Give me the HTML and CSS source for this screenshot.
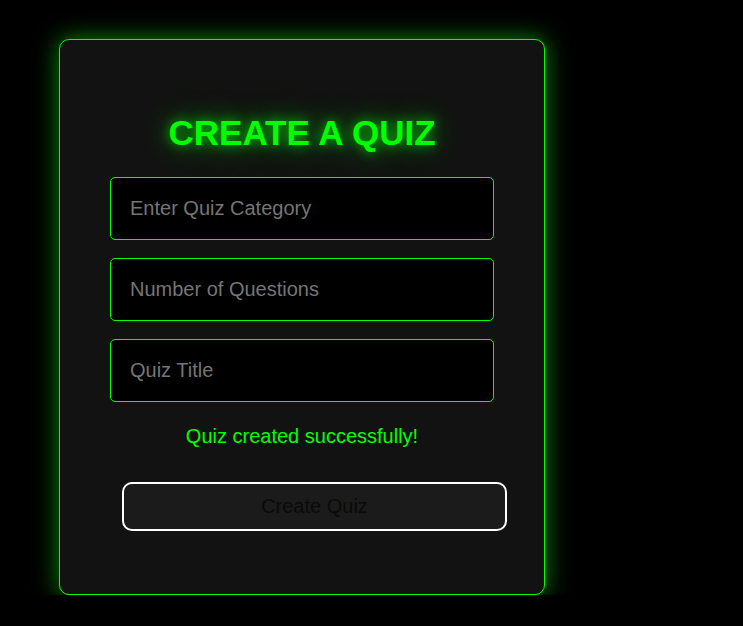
FILE: index.html
```html
<!DOCTYPE html>
<html lang="en">
<head>
<meta charset="utf-8">
<title>Create a Quiz</title>
<link rel="stylesheet" href="styles.css">
</head>
<body>
<div class="page">
  <div class="card">
    <h1 class="title">CREATE A QUIZ</h1>
    <form class="form">
      <input class="field" type="text" placeholder="Enter Quiz Category">
      <input class="field" type="text" placeholder="Number of Questions">
      <input class="field" type="text" placeholder="Quiz Title">
    </form>
    <p class="message">Quiz created successfully!</p>
    <button class="btn" type="button">Create Quiz</button>
  </div>
</div>
</body>
</html>
```
FILE: styles.css
```css
html, body {
  margin: 0;
  padding: 0;
  background: #000;
  font-family: "Liberation Sans", Arial, sans-serif;
}
.page {
  padding: 39px 0 0 59px;
}
.card {
  box-sizing: border-box;
  width: 486px;
  height: 556px;
  border: 1px solid #00ff00;
  border-radius: 10px;
  background: #121212;
  box-shadow: 0 0 24px rgba(0, 255, 0, 0.55);
  padding: 73px 50px 0 50px;
}
.title {
  margin: 0;
  font-size: 35px;
  line-height: 40px;
  font-weight: bold;
  text-align: center;
  color: #00ff00;
  text-shadow: 0 0 12px rgba(0, 255, 0, 0.75), 0 0 30px rgba(0, 255, 0, 0.55);
}
.form {
  margin-top: 24px;
  display: flex;
  flex-direction: column;
  gap: 18px;
}
.field {
  box-sizing: border-box;
  width: 384px;
  height: 63px;
  margin: 0;
  padding: 0 19px;
  border: 1px solid #00ff00;
  border-radius: 5px;
  background: #000;
  color: #fff;
  font-family: "Liberation Sans", Arial, sans-serif;
  font-size: 20px;
  outline: none;
}
.field::placeholder {
  color: #757575;
}
.message {
  margin: 23px 0 0 0;
  font-size: 20px;
  line-height: 23px;
  text-align: center;
  color: #00ff00;
}
.btn {
  box-sizing: border-box;
  display: block;
  width: 385px;
  height: 49px;
  margin: 34px 0 0 12px;
  border: 2px solid #fff;
  border-radius: 10px;
  background: #1b1b1b;
  color: #0a0a0a;
  font-family: "Liberation Sans", Arial, sans-serif;
  font-size: 20px;
  padding: 0;
}
```
